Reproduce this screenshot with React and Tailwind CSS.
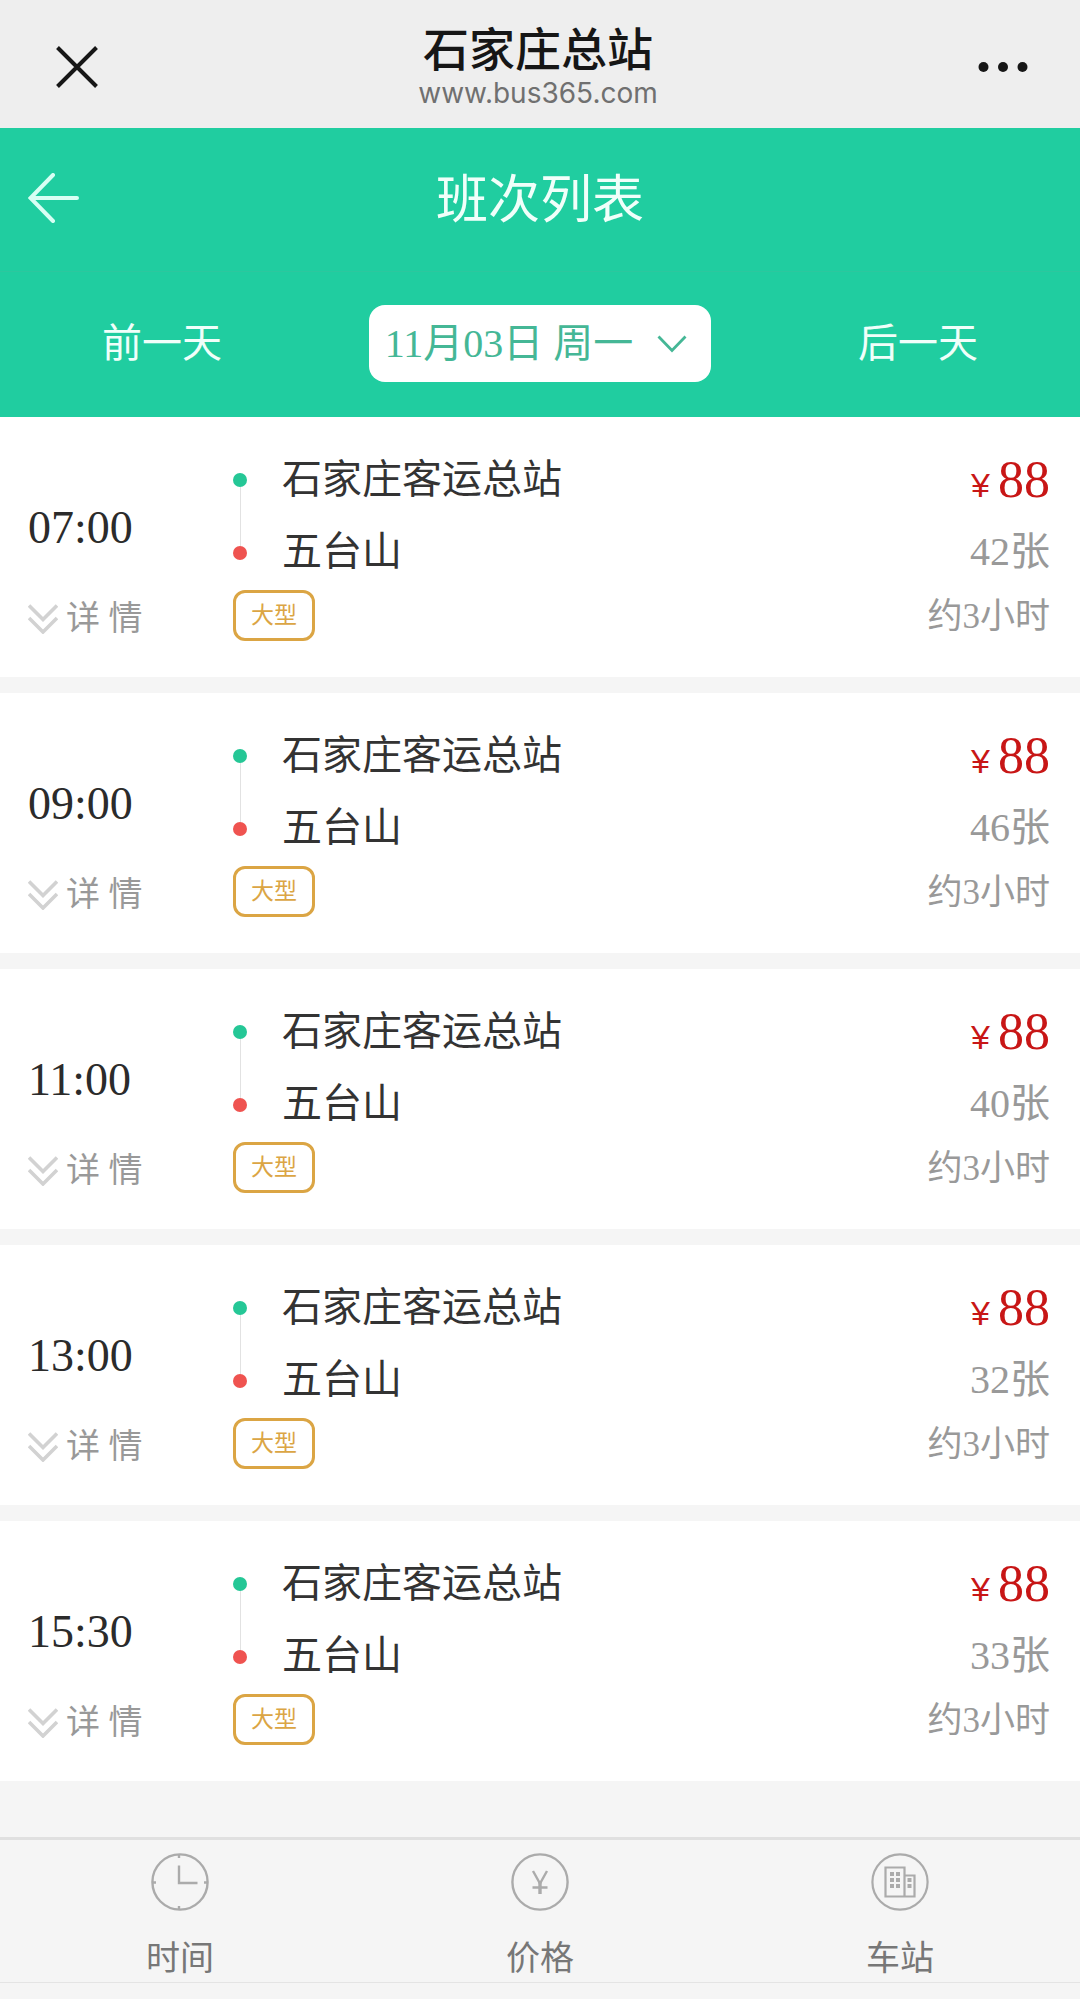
import React from 'react'

const TRIPS = [
  { time: '07:00', from: '石家庄客运总站', to: '五台山', type: '大型', price: 88, seats: 42, hours: 3 },
  { time: '09:00', from: '石家庄客运总站', to: '五台山', type: '大型', price: 88, seats: 46, hours: 3 },
  { time: '11:00', from: '石家庄客运总站', to: '五台山', type: '大型', price: 88, seats: 40, hours: 3 },
  { time: '13:00', from: '石家庄客运总站', to: '五台山', type: '大型', price: 88, seats: 32, hours: 3 },
  { time: '15:30', from: '石家庄客运总站', to: '五台山', type: '大型', price: 88, seats: 33, hours: 3 },
]

const CloseIcon = () => (
  <svg width="42" height="42" viewBox="0 0 42 42" fill="none" stroke="#161616" strokeWidth="4">
    <path d="M1.5 1.5 40.5 40.5M40.5 1.5 1.5 40.5" />
  </svg>
)

const MoreIcon = () => (
  <svg width="50" height="12" viewBox="0 0 50 12" fill="#161616">
    <circle cx="5.5" cy="6" r="5" />
    <circle cx="25" cy="6" r="5" />
    <circle cx="44.5" cy="6" r="5" />
  </svg>
)

const BackIcon = () => (
  <svg width="52" height="50" viewBox="0 0 52 50" fill="none" stroke="#d8fff4" strokeWidth="4" strokeLinecap="round">
    <path d="M25 2 2.5 25 25 48M2.5 25H49" />
  </svg>
)

const ChevronIcon = () => (
  <svg width="30" height="18" viewBox="0 0 30 18" fill="none" stroke="#45b796" strokeWidth="2.8">
    <path d="M1.5 1.5 15 15.5 28.5 1.5" />
  </svg>
)

const DetailsIcon = () => (
  <svg width="30" height="30" viewBox="0 0 30 30" fill="none" stroke="#d2d2d2" strokeWidth="3.6">
    <path d="M1 1.5 15 15.5 29 1.5M1 14 15 28 29 14" />
  </svg>
)

const ClockIcon = () => (
  <svg width="58" height="58" viewBox="0 0 58 58" fill="none" stroke="#ababab" strokeWidth="2.4">
    <circle cx="29" cy="29" r="27.6" />
    <path d="M28 12.5V30H46.5M28 1v4M28 53v4M1 29.5h4M53 29.5h4" />
  </svg>
)

const YuanIcon = () => (
  <svg width="58" height="58" viewBox="0 0 58 58" fill="none" stroke="#ababab" strokeWidth="2.4">
    <circle cx="29" cy="29" r="27.6" />
    <path d="M22 18 29 30.5 36 18M21.5 34.5H36.5" />
    <path d="M29 29V41" strokeWidth="3.4" />
  </svg>
)

const StationIcon = () => (
  <svg width="58" height="58" viewBox="0 0 58 58" fill="none" stroke="#ababab" strokeWidth="2.2">
    <circle cx="29" cy="29" r="27.6" />
    <path d="M14.5 14.5H33.5V43.5H14.5zM33.5 22.5H43.5V43.5H33.5" />
    <path
      d="M19 21h4M25 21h4M19 27h4M25 27h4M19 33h4M25 33h4M36.5 27h4M36.5 33h4"
      strokeWidth="4"
    />
  </svg>
)

const TABS = [
  { label: '时间', icon: <ClockIcon /> },
  { label: '价格', icon: <YuanIcon /> },
  { label: '车站', icon: <StationIcon /> },
]

const Trip = ({ time, from, to, type, price, seats, hours }) => {
  return (
    <li className="flex bg-white py-[27px] pr-[30px] pl-7">
      <div className="w-[205px]">
        <div className="flex h-36 items-end pb-6 text-[46px] leading-[72px] text-[#2b2b2b]">
          <time>{time}</time>
        </div>
        <button type="button" className="flex h-[62px] items-center gap-2 text-[34px] leading-[62px] text-[#999]">
          <DetailsIcon />
          <span>详 情</span>
        </button>
      </div>
      <div className="flex-1 text-[40px] leading-[72px] text-[#333]">
        <div className="flex">
          <div className="flex w-[14px] flex-col items-center pt-[29px] pb-7">
            <span className="size-[14px] rounded-full bg-[#25c796]" />
            <span className="w-px flex-1 bg-[#e2e2e2]" />
            <span className="size-[14px] rounded-full bg-[#ef5350]" />
          </div>
          <div className="pl-[35px]">
            <p>{from}</p>
            <p>{to}</p>
          </div>
        </div>
        <div className="flex h-[54px] items-center">
          <span className="rounded-xl border-3 border-[#dba544] px-[15px] text-[23px] leading-[45px] text-[#dba544]">{type}</span>
        </div>
      </div>
      <div className="text-right text-[40px] leading-[72px] text-[#999]">
        <p className="flex h-[72px] items-baseline justify-end gap-2 text-[#c81616]">
          <span className="font-['Liberation_Sans',sans-serif] text-[34px]">¥</span>
          <span className="text-[52px]">{price}</span>
        </p>
        <p>{seats}张</p>
        <p className="text-[35px] leading-[58px]">约{hours}小时</p>
      </div>
    </li>
  )
}

export default () => {
  return (
    <div className="flex min-h-screen flex-col bg-[#f5f5f5] font-['Liberation_Serif','Noto_Sans_CJK_SC',serif]">
      <div className="flex h-32 items-center justify-between bg-[#eee] pt-[6px] pr-[52px] pl-14">
        <button type="button" aria-label="关闭">
          <CloseIcon />
        </button>
        <div className="text-center font-['Inter','Noto_Sans_CJK_SC',sans-serif]">
          <p className="text-[46px] leading-[52px] font-medium text-[#161616]">石家庄总站</p>
          <p className="text-[28px] leading-[36px] text-[#707070]">www.bus365.com</p>
        </div>
        <button type="button" aria-label="更多">
          <MoreIcon />
        </button>
      </div>

      <header className="bg-[#20cda0] text-[#f0fffa]">
        <div className="grid h-36 grid-cols-[1fr_auto_1fr] items-center border-b border-[#2cc79e] px-7 pt-[2px]">
          <button type="button" aria-label="返回" className="justify-self-start pb-[6px]">
            <BackIcon />
          </button>
          <h1 className="text-[52px] leading-[72px]">班次列表</h1>
        </div>
        <div className="grid h-[145px] grid-cols-[3fr_4fr_3fr] items-center justify-items-center pb-[2px] text-[40px]">
          <button type="button">前一天</button>
          <button type="button" className="flex h-[77px] items-center gap-6 rounded-2xl bg-white pr-6 pl-4 text-[#45b796]">
            <span>11月03日 周一</span>
            <ChevronIcon />
          </button>
          <button type="button">后一天</button>
        </div>
      </header>

      <ul className="flex flex-1 flex-col gap-4">
        {TRIPS.map((trip) => (
          <Trip key={trip.time} {...trip} />
        ))}
      </ul>

      <nav className="mb-4 grid grid-cols-3 border-t-3 border-b border-t-[#e0e0e0] border-b-[#e4e4e4] pt-[13px]">
        {TABS.map(({ label, icon }) => (
          <button key={label} type="button" className="flex flex-col items-center gap-6 text-[34px] leading-[47px] text-[#777]">
            {icon}
            <span>{label}</span>
          </button>
        ))}
      </nav>
    </div>
  )
}
